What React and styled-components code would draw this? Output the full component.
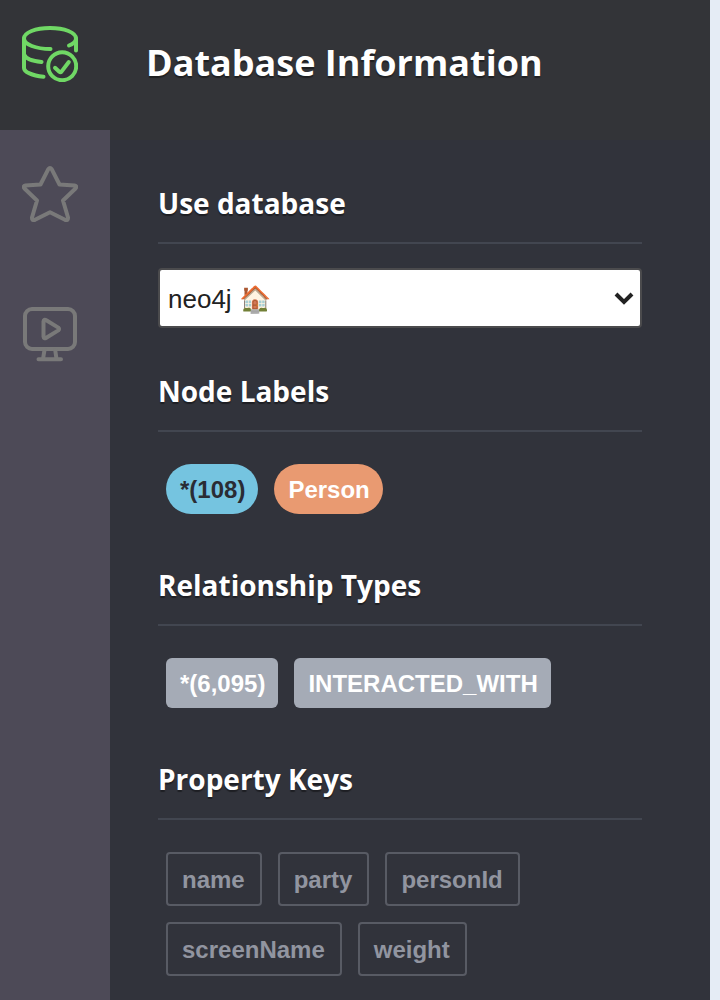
import React from "react";
import styled, { createGlobalStyle } from "styled-components";

const Global = createGlobalStyle`
  * { box-sizing: border-box; }
  body { margin: 0; background: #e5ecf5; }
`;

const Page = styled.div`
  display: flex;
  min-height: 100vh;
  padding-right: 10px;
  background: #e5ecf5;
`;

const Sidebar = styled.nav`
  flex: none;
  width: 110px;
  display: flex;
  flex-direction: column;
  background: #4d4a57;
`;

const Tab = styled.button`
  display: block;
  margin: 0;
  border: 0;
  padding: ${(p) => (p.$active ? "26px 22px 48px" : "36px 22px 48px")};
  text-align: left;
  line-height: 0;
  cursor: pointer;
  background: ${(p) => (p.$active ? "#333438" : "transparent")};
  color: ${(p) => (p.$active ? "#70d865" : "#797979")};
`;

const Icon = styled.svg`
  width: 56px;
  height: 56px;
  fill: none;
  stroke: currentColor;
  stroke-width: 4;
  stroke-linecap: round;
  stroke-linejoin: round;
`;

const Drawer = styled.main`
  flex: 1;
  min-width: 0;
  background: #31333b;
  color: #fff;
`;

const Header = styled.header`
  height: 140px;
  padding: 38px 36px 0;
  background: #333438;
`;

const Title = styled.h1`
  margin: 0;
  font: 700 36px/50px "Open Sans", sans-serif;
  text-shadow: 0 2px 1px rgba(0, 0, 0, 0.4);
`;

const Section = styled.section`
  padding: 44px 68px 0 48px;
`;

const Heading = styled.h2`
  margin: 0 0 24px;
  padding-bottom: 20px;
  border-bottom: 2px solid #424650;
  font: 700 28px/38px "Open Sans", sans-serif;
  text-shadow: 0 2px 1px rgba(0, 0, 0, 0.4);
`;

const SelectBox = styled.div`
  position: relative;
`;

const Select = styled.select`
  appearance: none;
  display: block;
  width: 100%;
  height: 60px;
  padding: 2px 40px 0 8px;
  border: 2px solid #4b4b4d;
  border-radius: 4px;
  background: #fff;
  color: #222;
  font: 400 26px "Liberation Sans", Arial, sans-serif;
`;

const Chevron = styled.svg`
  position: absolute;
  right: 8px;
  top: 23px;
  width: 20px;
  height: 14px;
  pointer-events: none;
  fill: none;
  stroke: #222;
  stroke-width: 4;
`;

const Chips = styled.div`
  display: flex;
  flex-wrap: wrap;
  gap: 16px;
  padding: 8px;
`;

const Chip = styled.button`
  border: 0;
  margin: 0;
  padding: 2px 13px 0 14px;
  cursor: pointer;
  font: 700 24px/48px "Liberation Sans", Arial, sans-serif;
`;

const LabelChip = styled(Chip)`
  border-radius: 25px;
  background: ${(p) => p.$bg};
  color: ${(p) => p.$color};
`;

const TypeChip = styled(Chip)`
  border-radius: 6px;
  background: #a5abb6;
  color: #fff;
`;

const KeyChip = styled(Chip)`
  padding: 2px 15px 0 14px;
  border: 2px solid #585b64;
  border-radius: 4px;
  background: transparent;
  color: #9195a0;
`;

export default function App() {
  return (
    <>
      <Global />
      <Page>
        <Sidebar aria-label="Drawers">
          <Tab $active aria-label="Database Information">
            <Icon viewBox="0 0 56 56">
              <path d="M28.500 23C14 23 2 18.500 2 12.500 2 6.500 13.500 2 28 2s26 4.500 26 10.500c0 2.500-2 5-7 7" />
              <path d="M2 12.500v29.500c0 4 8 7.500 19.500 8.800M2 28.500c1.500 4 8 6.500 17.500 7.500M54 12.500v12" />
              <circle cx="40.200" cy="40.200" r="14" />
              <path d="M33 41.800l4.300 4q1.200 1 2.200-.2l7.300-9.600" />
            </Icon>
          </Tab>
          <Tab aria-label="Favorites">
            <Icon viewBox="0 0 56 56">
              <path d="M26.300 3.200Q28 .8 29.700 3.200L37.500 18.500 52.500 19.500Q55.500 20.200 53.500 22.500L41 34.500 46 51.500Q46.300 55 43 53.800L28 46.200 13 53.800Q9.700 55 10 51.500L15 34.500 2.500 22.500Q.5 20.200 3.500 19.500L18.500 18.500Z" />
            </Icon>
          </Tab>
          <Tab aria-label="Guides">
            <Icon viewBox="0 0 56 56">
              <rect x="3" y="3" width="50" height="40" rx="7" />
              <path d="M21.500 15.500v15q.3 2.800 2.800 1.200l12-7.300q1.600-1.400 0-2.800l-12-7.300q-2.500-1.600-2.800 1.200z" />
              <path d="M22.500 44l-1.500 9M33.200 44l1.300 9M16.500 53.200h22.500" />
            </Icon>
          </Tab>
        </Sidebar>
        <Drawer>
          <Header>
            <Title>Database Information</Title>
          </Header>
          <Section>
            <Heading id="use-db">Use database</Heading>
            <SelectBox>
              <Select aria-labelledby="use-db" defaultValue="neo4j">
                <option value="neo4j">neo4j 🏠</option>
              </Select>
              <Chevron viewBox="0 0 20 14" aria-hidden="true">
                <path d="M2 3l8 8 8-8" />
              </Chevron>
            </SelectBox>
          </Section>
          <Section>
            <Heading>Node Labels</Heading>
            <Chips>
              <LabelChip $bg="#75c4e0" $color="#2a2c34">*(108)</LabelChip>
              <LabelChip $bg="#e99a71" $color="#fff">Person</LabelChip>
            </Chips>
          </Section>
          <Section>
            <Heading>Relationship Types</Heading>
            <Chips>
              <TypeChip>*(6,095)</TypeChip>
              <TypeChip>INTERACTED_WITH</TypeChip>
            </Chips>
          </Section>
          <Section>
            <Heading>Property Keys</Heading>
            <Chips>
              {["name", "party", "personId", "screenName", "weight"].map((k) => (
                <KeyChip key={k}>{k}</KeyChip>
              ))}
            </Chips>
          </Section>
        </Drawer>
      </Page>
    </>
  );
}
